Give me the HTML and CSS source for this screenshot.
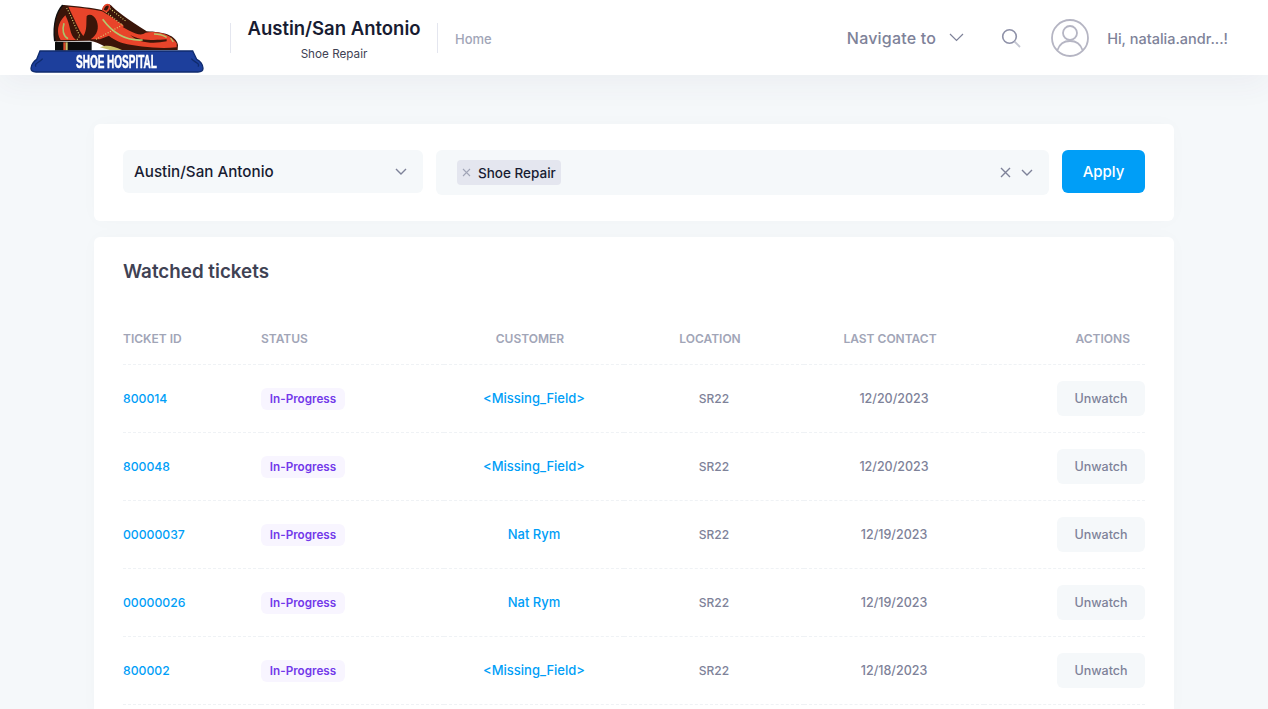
FILE: index.html
```html
<!DOCTYPE html>
<html lang="en">
<head>
  <meta charset="UTF-8" />
  <title>Watched tickets</title>
  <link rel="stylesheet" href="styles.css">
</head>
<body>
  <header class="topbar">
    <svg class="logo" viewBox="90 9 522 210" aria-label="Shoe Hospital">
      <path fill="#0b0b0b" d="M165 125H275V152H165Z" />
      <path fill="#d8482a" d="M190 127H197V152H190Z" />
      <path fill="#c9c06a" d="M197 127H203V152H197Z" />
      <path fill="#111" d="M186 14C168 34 156 70 162 124L172 124C168 80 172 40 194 16Z" />
      <path fill="#3a1509" d="M192 15C230 18 280 24 306 30C310 14 325 8 333 16C345 30 385 60 440 94C490 96 528 105 534 135L533 150L332 150C305 132 285 125 270 122L168 124C160 90 165 40 192 15Z" />
      <path fill="#e8442a" d="M196 46C172 68 168 100 182 120L228 120C206 104 214 78 196 46Z" />
      <path fill="#e8442a" d="M205 20C240 22 275 27 306 34C318 40 350 62 372 78L346 100L300 118L272 118C292 104 298 84 290 62C282 44 268 40 260 48C258 70 262 90 250 108C236 90 220 50 205 20Z" />
      <path fill="#e8442a" d="M296 66C320 56 350 70 388 92C410 102 424 108 436 98C470 92 510 100 530 130L530 142C480 148 410 140 370 130C350 124 330 112 318 100C308 90 300 78 296 66Z" />
      <path fill="#3a1509" d="M390 104C420 124 470 120 500 118L500 124C460 132 416 130 390 104Z" />
      <path fill="none" stroke="#a9c46a" stroke-width="5" d="M192 70C186 90 190 108 204 116" />
      <path fill="none" stroke="#b5c96e" stroke-width="5" d="M308 58C330 88 370 124 428 120" />
      <path fill="none" stroke="#b5c96e" stroke-width="4" d="M462 102C480 102 490 106 500 112M512 114L520 126" />
      <path fill="none" stroke="#d9cf72" stroke-width="3.500" stroke-dasharray="3 5" d="M200 24C216 52 226 84 240 108C236 112 232 118 230 120M288 118C310 106 340 90 372 72M330 26L378 64M318 36L366 74" />
      <path fill="#3a1509" stroke="#e8442a" stroke-width="5" d="M309 30C310 18 320 11 327 15C331 20 326 32 318 35Z" />
      <path fill="#c9c06a" d="M300 142C320 132 340 138 366 150H330Z" />
      <path fill="#1d3f9c" stroke="#0f2b6e" stroke-width="4" d="M120 153H578L590 178C600 182 609 194 609 205C609 212 602 216 594 216H108C98 216 93 212 93 205C93 194 104 182 110 178Z" />
      <path fill="none" stroke="#0f2b6e" stroke-width="4" d="M108 200C100 190 120 188 128 176M594 200C602 190 584 188 574 176" />
      <text class="logo-text" transform="translate(228 204) scale(0.556 1)">SHOE HOSPITAL</text>
    </svg>
    <div class="brand">
      <div class="brand-name">Austin/San Antonio</div>
      <div class="brand-sub">Shoe Repair</div>
    </div>
    <a class="home-link">Home</a>
    <div class="topbar-right">
      <div class="nav-menu">
        <span class="nudge">Navigate to</span>
        <svg class="nav-chevron" viewBox="0 0 15 9"><path d="M1 1l6.500 6.500L14 1" /></svg>
      </div>
      <svg class="search-icon" viewBox="0 0 20 20">
        <circle cx="8.500" cy="8.500" r="6.800" />
        <path class="search-handle" d="M13.500 13.500L19 19" />
      </svg>
      <svg class="avatar" viewBox="0 0 38 38">
        <circle cx="19" cy="19" r="18" />
        <circle cx="19" cy="14" r="7" />
        <path d="M6.500 31c2-6 7-9 12.500-9s10.500 3 12.500 9" />
      </svg>
      <span class="greeting nudge">Hi, natalia.andr...!</span>
    </div>
  </header>

  <main class="content">
    <section class="card filters">
      <div class="select">
        <span>Austin/San Antonio</span>
        <svg class="chevron" viewBox="0 0 12 7"><path d="M1 1l5 5 5-5" /></svg>
      </div>
      <div class="multi-select">
        <span class="tag">
          <svg class="tag-x" viewBox="0 0 9 9"><path d="M1 1l7 7M8 1l-7 7" /></svg>
          Shoe Repair
        </span>
        <svg class="clear-x" viewBox="0 0 11 11"><path d="M1 1l9 9M10 1l-9 9" /></svg>
        <svg class="chevron" viewBox="0 0 12 7"><path d="M1 1l5 5 5-5" /></svg>
      </div>
      <button class="apply-btn">Apply</button>
    </section>

    <section class="card tickets">
      <h2>Watched tickets</h2>
      <table>
        <thead>
          <tr>
            <th class="col-id">Ticket ID</th>
            <th class="col-status">Status</th>
            <th class="col-mid">Customer</th>
            <th class="col-mid">Location</th>
            <th class="col-mid">Last contact</th>
            <th class="col-actions">Actions</th>
          </tr>
        </thead>
        <tbody>
          <tr>
            <td><a class="link id-link">800014</a></td>
            <td><span class="badge">In-Progress</span></td>
            <td class="center"><a class="link">&lt;Missing_Field&gt;</a></td>
            <td class="center">SR22</td>
            <td class="center date">12/20/2023</td>
            <td class="right"><button class="unwatch">Unwatch</button></td>
          </tr>
          <tr>
            <td><a class="link id-link">800048</a></td>
            <td><span class="badge">In-Progress</span></td>
            <td class="center"><a class="link">&lt;Missing_Field&gt;</a></td>
            <td class="center">SR22</td>
            <td class="center date">12/20/2023</td>
            <td class="right"><button class="unwatch">Unwatch</button></td>
          </tr>
          <tr>
            <td><a class="link id-link">00000037</a></td>
            <td><span class="badge">In-Progress</span></td>
            <td class="center"><a class="link">Nat Rym</a></td>
            <td class="center">SR22</td>
            <td class="center date">12/19/2023</td>
            <td class="right"><button class="unwatch">Unwatch</button></td>
          </tr>
          <tr>
            <td><a class="link id-link">00000026</a></td>
            <td><span class="badge">In-Progress</span></td>
            <td class="center"><a class="link">Nat Rym</a></td>
            <td class="center">SR22</td>
            <td class="center date">12/19/2023</td>
            <td class="right"><button class="unwatch">Unwatch</button></td>
          </tr>
          <tr>
            <td><a class="link id-link">800002</a></td>
            <td><span class="badge">In-Progress</span></td>
            <td class="center"><a class="link">&lt;Missing_Field&gt;</a></td>
            <td class="center">SR22</td>
            <td class="center date">12/18/2023</td>
            <td class="right"><button class="unwatch">Unwatch</button></td>
          </tr>
        </tbody>
      </table>
    </section>
  </main>
</body>
</html>
```

FILE: styles.css
```css
html, body {
  height: 100%;
  overflow: hidden;
}

body {
  margin: 0;
  background: #f5f8fa;
  font-family: Inter, "Noto Sans", sans-serif;
  color: #181c32;
}

svg {
  display: block;
  fill: none;
}

/* top bar */
.topbar {
  display: flex;
  align-items: center;
  height: 75px;
  padding: 0 40px 0 30px;
  background: white;
  box-shadow: 0 10px 30px rgba(82,63,105,0.05);
  box-sizing: border-box;
}

.logo {
  width: 174px;
  height: 70px;
  flex: none;
  filter: blur(0.3px);
}

.logo-text {
  font-family: "Liberation Sans", sans-serif;
  font-size: 54px;
  font-weight: 700;
  fill: white;
  stroke: white;
  stroke-width: 1.5px;
}

.brand {
  width: 208px;
  height: 30px;
  margin-left: 26px;
  padding-top: 2px;
  box-sizing: border-box;
  display: flex;
  flex-direction: column;
  align-items: center;
  justify-content: center;
  border-left: 1px solid #e4e6ef;
  border-right: 1px solid #e4e6ef;
}

.brand-name {
  font-size: 18.5px;
  font-weight: 600;
  line-height: 24px;
}

.brand-sub {
  font-size: 11.7px;
  line-height: 16px;
  margin-top: 6px;
  color: #3f4254;
}

.home-link {
  margin-left: 17px;
  padding-top: 2px;
  font-size: 13px;
  font-weight: 500;
  color: #a1a5b7;
}

.topbar-right {
  display: flex;
  align-items: center;
  margin-left: auto;
  color: #7e8299;
}

.nudge {
  padding-top: 1px;
}

.nav-menu {
  display: flex;
  align-items: center;
  gap: 13px;
  font-size: 16px;
  font-weight: 500;
  letter-spacing: 0.2px;
}

.nav-chevron {
  width: 15px;
  height: 9px;
}

.nav-chevron path {
  stroke: #7e8299;
  stroke-width: 1.2;
}

.search-icon {
  width: 20px;
  height: 20px;
  margin-left: 37px;
}

.search-icon circle {
  stroke: #8e91a8;
  stroke-width: 1.6;
}

.search-handle {
  stroke: #c4c6d2;
  stroke-width: 1.8;
}

.avatar {
  width: 38px;
  height: 38px;
  margin-left: 30px;
}

.avatar circle, .avatar path {
  stroke: #b5b5c3;
  stroke-width: 1.8;
}

.greeting {
  margin-left: 18px;
  font-size: 14.5px;
  font-weight: 500;
}

/* page content */
.content {
  padding: 49px 94px 0;
}

.card {
  background: white;
  border-radius: 6px;
  box-shadow: 0 0 20px rgba(76,87,125,0.02);
}

.filters {
  display: flex;
  align-items: flex-start;
  gap: 13px;
  height: 97px;
  padding: 26px 29px;
  box-sizing: border-box;
}

.select, .multi-select {
  display: flex;
  align-items: center;
  background: #f5f8fa;
  border-radius: 6px;
  box-sizing: border-box;
}

.select {
  width: 300px;
  height: 43px;
  padding: 0 16px 0 11px;
  justify-content: space-between;
  font-size: 15.2px;
  font-weight: 500;
}

.multi-select {
  flex: 1;
  height: 45px;
  padding: 0 16px 0 21px;
}

.chevron {
  width: 12px;
  height: 7px;
}

.chevron path, .clear-x path {
  stroke: #7e8299;
  stroke-width: 1.4;
}

.tag {
  display: flex;
  align-items: center;
  gap: 7px;
  height: 25px;
  padding: 0 5px;
  background: #e4e6ef;
  border-radius: 4px;
  font-size: 13.5px;
  font-weight: 500;
}

.tag-x {
  width: 9px;
  height: 9px;
}

.tag-x path {
  stroke: #a1a5b7;
  stroke-width: 1.1;
}

.clear-x {
  width: 11px;
  height: 11px;
  margin-left: auto;
  margin-right: 10px;
}

.apply-btn {
  width: 83px;
  height: 43px;
  background: #009ef7;
  color: white;
  border: none;
  border-radius: 6px;
  font-family: inherit;
  font-size: 15px;
  font-weight: 500;
}

.tickets {
  margin-top: 16px;
  padding: 0 29px;
  height: 480px;
}

h2 {
  margin: 0;
  height: 70px;
  line-height: 70px;
  font-size: 18.8px;
  font-weight: 600;
  color: #3f4254;
}

table {
  width: 100%;
  border-collapse: collapse;
  table-layout: fixed;
}

th {
  padding: 25px 0 18px;
  line-height: 14px;
  font-size: 12px;
  font-weight: 600;
  text-transform: uppercase;
  color: #a1a5b7;
  border-bottom: 1px dashed #eff2f5;
}

.col-id {
  width: 138px;
  text-align: left;
}

.col-status {
  width: 183px;
  text-align: left;
}

.col-mid {
  width: 180px;
  padding-right: 8px;
  box-sizing: border-box;
  text-align: center;
}

.col-actions {
  text-align: right;
  padding-right: 15px;
}

td {
  height: 67px;
  padding: 0;
  font-size: 12px;
  font-weight: 500;
  color: #7e8299;
  border-bottom: 1px dashed #eff2f5;
}

td.center {
  text-align: center;
}

td.right {
  text-align: right;
}

td.date {
  font-size: 12.5px;
}

.link {
  font-size: 13px;
  color: #009ef7;
  vertical-align: 1px;
}

.id-link {
  font-size: 12.2px;
  vertical-align: 0;
}

.badge {
  display: inline-block;
  width: 84px;
  height: 22px;
  line-height: 22px;
  text-align: center;
  background: #f8f5ff;
  border-radius: 6px;
  font-size: 11.7px;
  font-weight: 600;
  color: #7239ea;
  vertical-align: middle;
}

.unwatch {
  width: 88px;
  height: 35px;
  background: #f5f8fa;
  border: none;
  border-radius: 6px;
  vertical-align: middle;
  font-family: inherit;
  font-size: 12.5px;
  font-weight: 500;
  color: #7e8299;
}
```
